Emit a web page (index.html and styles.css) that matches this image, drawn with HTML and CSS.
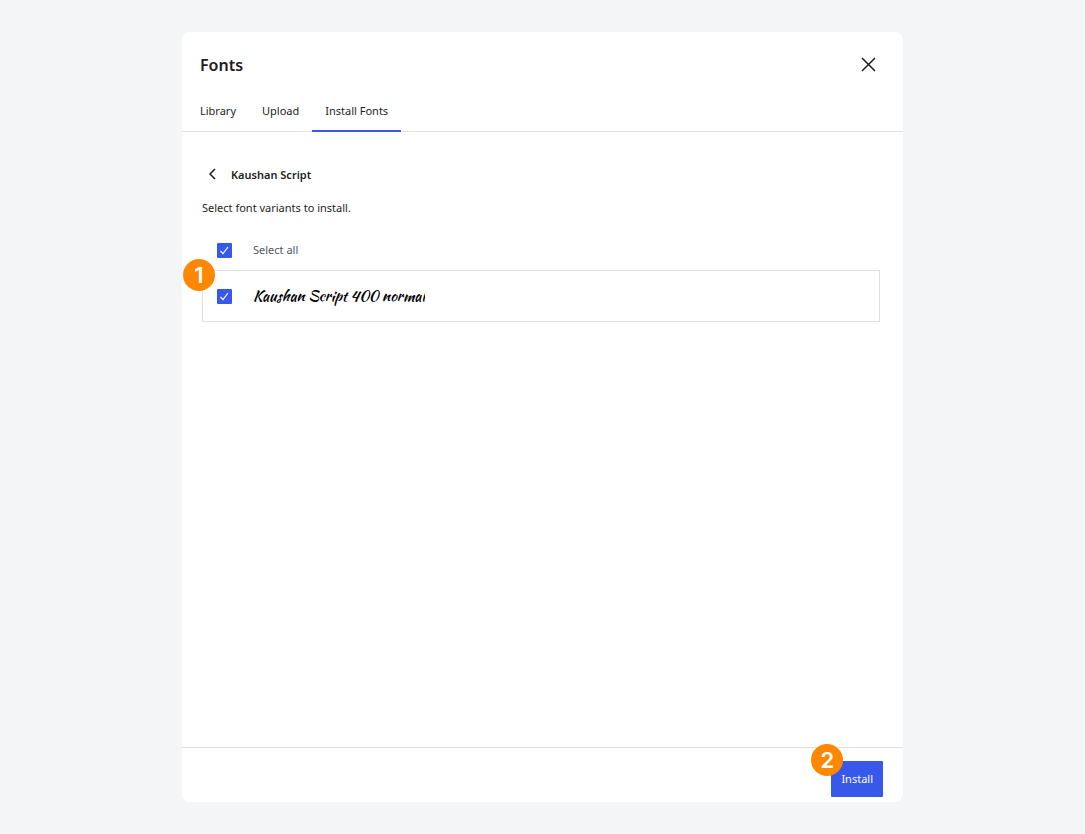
FILE: index.html
```html
<!DOCTYPE html>
<html lang="en">
    <head>
        <meta charset="utf-8">
        <title>Fonts</title>
        <link rel="stylesheet" href="styles.css">
    </head>
    <body>
        <div class="modal" role="dialog" aria-labelledby="title">
            <header class="header">
                <h1 id="title">Fonts</h1>
                <button class="close" aria-label="Close">
                    <svg width="16" height="16" viewBox="0 0 16 16">
                        <path d="M2 1l13 13M15 1L2 14" />
                    </svg>
                </button>
            </header>

            <nav class="tabs" role="tablist">
                <button class="tab" role="tab">Library</button>
                <button class="tab" role="tab">Upload</button>
                <button class="tab active" role="tab" aria-selected="true">Install Fonts</button>
            </nav>

            <main class="content">
                <div class="family">
                    <button class="back" aria-label="Back">
                        <svg width="10" height="14" viewBox="0 0 10 14">
                            <path d="M7 1L2 6L7 11" />
                        </svg>
                    </button>
                    <h2>Kaushan Script</h2>
                </div>
                <p class="hint">Select font variants to install.</p>

                <label class="select-all">
                    <input type="checkbox" checked>
                    <span>Select all</span>
                </label>
                <div class="variants">
                    <label class="variant">
                        <input type="checkbox" checked>
                        <span class="preview">Kaushan Script 400 normal</span>
                    </label>
                    <span class="badge badge-variant">1</span>
                </div>
            </main>

            <footer class="footer">
                <div class="action">
                    <button class="install">Install</button>
                    <span class="badge badge-install">2</span>
                </div>
            </footer>
        </div>
    </body>
</html>
```
FILE: styles.css
```css
* {
    box-sizing: border-box;
}
body {
    background-color: #f3f5f7;
    color: #1e1e1e;
    font-family: "Noto Sans", sans-serif;
    font-size: 11px;
    line-height: 16px;
    margin: 0;
    padding: 32px 182px;
    min-height: 100vh;
    display: flex;
}
button {
    font: inherit;
    color: inherit;
    background: none;
    border: 0;
    margin: 0;
    padding: 0;
    cursor: pointer;
}
svg {
    display: block;
    fill: none;
    stroke: #1e1e1e;
    stroke-width: 1.5;
}
h1,
h2,
p {
    margin: 0;
}

.modal {
    display: flex;
    flex-direction: column;
    flex: 1;
    background-color: white;
    border-radius: 8px;
}
.header {
    display: flex;
    align-items: center;
    justify-content: space-between;
    height: 60px;
    padding: 5px 27px 0 18px;
}
.header h1 {
    font-size: 16px;
    font-weight: 600;
    line-height: 24px;
}

.tabs {
    display: flex;
    height: 40px;
    padding-left: 4px;
    border-bottom: 1px solid #e0e0e0;
}
.tab {
    height: 40px;
    padding: 0 13px;
    border-bottom: 2px solid transparent;
}
.tab:first-child {
    padding-left: 14px;
}
.tab.active {
    border-bottom-color: #3858e9;
}

.content {
    flex: 1;
    padding: 35px 23px 24px 20px;
}
.family {
    display: flex;
    align-items: center;
    gap: 13px;
    height: 16px;
    padding-left: 6px;
}
.family h2 {
    font-size: 11px;
    font-weight: 600;
    line-height: 16px;
}
.hint {
    margin-top: 17px;
}

.select-all,
.variant {
    display: flex;
    align-items: center;
    gap: 21px;
}
.select-all {
    color: #50575e;
    height: 40px;
    margin-top: 14px;
    padding-left: 15px;
}
.variants {
    position: relative;
}
.variant {
    height: 52px;
    padding-left: 14px;
    border: 1px solid #e0e0e0;
}
.preview {
    color: black;
    font-family: "Kaushan Script", cursive;
    font-size: 15px;
    line-height: 24px;
    overflow: hidden;
}
input[type="checkbox"] {
    appearance: none;
    width: 15px;
    height: 15px;
    margin: 0;
    border-radius: 1px;
    background: #3858e9 url("data:image/svg+xml,%3Csvg xmlns='http://www.w3.org/2000/svg' viewBox='0 0 15 15' fill='none' stroke='white' stroke-width='1.2'%3E%3Cpath d='M3.500 8L6 10.500L11 4'/%3E%3C/svg%3E") center no-repeat;
}
input[type="checkbox"]:not(:checked) {
    background: white;
    border: 1px solid #1e1e1e;
}

.footer {
    display: flex;
    justify-content: flex-end;
    padding: 13px 20px 5px;
    border-top: 1px solid #dddddd;
}
.action {
    position: relative;
}
.install {
    background-color: #3858e9;
    color: white;
    height: 36px;
    padding: 0 10px;
    border-radius: 1px;
}

.badge {
    position: absolute;
    width: 32px;
    height: 32px;
    border-radius: 50%;
    background-color: #ff8800;
    color: white;
    font-family: Inter, sans-serif;
    font-size: 22px;
    font-weight: 600;
    line-height: 32px;
    text-align: center;
}
.badge-variant {
    top: -11px;
    left: -19px;
}
.badge-install {
    top: -17px;
    left: -20px;
}
```
